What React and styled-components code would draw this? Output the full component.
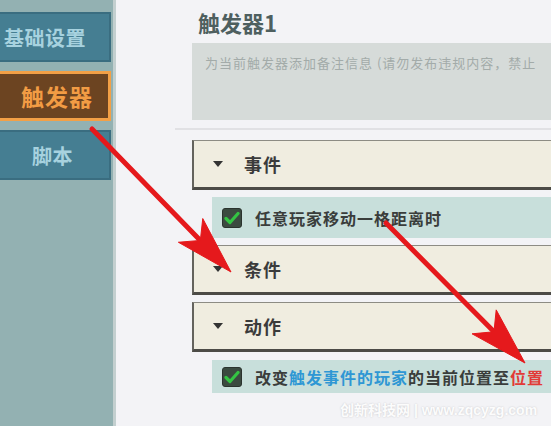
import React from "react";
import styled, { createGlobalStyle } from "styled-components";

const GlobalStyle = createGlobalStyle`
  html, body {
    margin: 0;
    padding: 0;
    background: #f3f3f6;
  }
  * {
    box-sizing: border-box;
  }
`;

const font = `"Noto Sans CJK SC", "Noto Sans", sans-serif`;

const Screen = styled.div`
  position: relative;
  display: flex;
  width: 551px;
  height: 426px;
  overflow: hidden;
  font-family: ${font};
  background: #f3f3f6;
`;

const Sidebar = styled.div`
  flex: 0 0 116px;
  display: flex;
  flex-direction: column;
  gap: 9px;
  padding-top: 12px;
  background: #93b1b2;
  border-right: 3px solid #c3cfcf;
`;

const NavButton = styled.div`
  width: 111px;
  height: 50px;
  display: flex;
  align-items: center;
  padding-left: ${(p) => p.$indent}px;
  font-size: ${(p) => (p.$active ? 23 : 20)}px;
  font-weight: 700;
  letter-spacing: ${(p) => (p.$active ? 1 : 0.5)}px;
  color: ${(p) => (p.$active ? "#f29c44" : "#a7d2df")};
  background: ${(p) => (p.$active ? "#6c4421" : "#457e92")};
  border: ${(p) => (p.$active ? "3px solid #f3a046" : "2px solid #3a6d80")};
  border-left: none;
`;

const Main = styled.div`
  flex: 1;
  display: flex;
  flex-direction: column;
  min-width: 0;
`;

const Head = styled.div`
  padding: 7px 0 0 76px;
`;

const Title = styled.div`
  height: 30px;
  line-height: 30px;
  padding-left: 6px;
  font-size: 22px;
  font-weight: 700;
  color: #4e5f5f;
`;

const Note = styled.div`
  margin-top: 6px;
  margin-right: -20px;
  height: 77px;
  padding: 10px 0 0 13px;
  background: #d6dbd9;
  font-size: 13px;
  letter-spacing: 1px;
  color: #a3aba9;
  white-space: nowrap;
`;

const Divider = styled.div`
  margin: 8px 0 0 59px;
  height: 2px;
  background: #e1e1e4;
`;

const Sections = styled.div`
  display: flex;
  flex-direction: column;
  padding: 10px 0 0 76px;
  margin-right: -20px;
`;

const SectionHead = styled.div`
  display: flex;
  align-items: center;
  height: 50px;
  margin-top: ${(p) => p.$gap || 0}px;
  padding-left: 19px;
  background: #f0ede0;
  border-top: 1px solid #8d8c84;
  border-left: 2px solid #64635d;
  border-bottom: 3px solid #4c4b46;
  font-size: 18px;
  font-weight: 700;
  color: #3b3b3b;
  letter-spacing: 1px;
`;

const Caret = styled.span`
  width: 0;
  height: 0;
  margin-right: 21px;
  border-left: 5px solid transparent;
  border-right: 5px solid transparent;
  border-top: 6px solid #333;
`;

const Row = styled.div`
  display: flex;
  align-items: center;
  height: ${(p) => p.$h}px;
  margin: ${(p) => p.$gap}px 0 0 20px;
  padding-left: 10px;
  background: #c8dfdb;
  font-size: 16px;
  font-weight: 700;
  letter-spacing: 1px;
  color: #3a3d3b;
  white-space: nowrap;
`;

const Check = styled.span`
  flex: 0 0 20px;
  height: 20px;
  margin-right: 13px;
  border-radius: 3px;
  background: #3b4a40;
  border: 1px solid #2b332e;
  display: flex;
  align-items: center;
  justify-content: center;
`;

const Link = styled.span`
  color: ${(p) => (p.$red ? "#e23a36" : "#2f97d4")};
`;

const Overlay = styled.svg`
  position: absolute;
  left: 0;
  top: 0;
  pointer-events: none;
`;

const Watermark = styled.div`
  position: absolute;
  left: 340px;
  top: 399px;
  font-family: "Liberation Sans", ${font};
  font-size: 14px;
  font-weight: 700;
  color: rgba(255, 255, 255, 0.95);
  text-shadow: 0 0 2px rgba(0, 0, 0, 0.18);
  white-space: nowrap;
`;

const Tick = () => (
  <svg width="16" height="14" viewBox="0 0 16 14">
    <path d="M2 7.5 L6 11.5 L14 2.5" fill="none" stroke="#34c443" strokeWidth="3.2" strokeLinecap="round" strokeLinejoin="round" />
  </svg>
);

const Arrow = ({ from, tip }) => {
  const dx = tip[0] - from[0];
  const dy = tip[1] - from[1];
  const len = Math.hypot(dx, dy);
  const d = [dx / len, dy / len];
  const p = [d[1], -d[0]];
  const at = (k, w) => [tip[0] - d[0] * k + p[0] * w, tip[1] - d[1] * k + p[1] * w];
  const w1 = at(58, 17);
  const w2 = at(58, -17);
  const n = at(44, 0);
  const pts = [tip, w1, n, w2].map((q) => q.join(",")).join(" ");
  return (
    <g fill="#e5191c" stroke="#e5191c">
      <line x1={from[0]} y1={from[1]} x2={n[0]} y2={n[1]} strokeWidth="5" strokeLinecap="round" />
      <polygon points={pts} strokeWidth="1" strokeLinejoin="round" />
    </g>
  );
};

export default function App() {
  return (
    <>
      <GlobalStyle />
      <Screen>
        <Sidebar>
          <NavButton $indent={4}>基础设置</NavButton>
          <NavButton $indent={21} $active>
            触发器
          </NavButton>
          <NavButton $indent={32}>脚本</NavButton>
        </Sidebar>
        <Main>
          <Head>
            <Title>触发器1</Title>
            <Note>为当前触发器添加备注信息 (请勿发布违规内容，禁止</Note>
          </Head>
          <Divider />
          <Sections>
            <SectionHead>
              <Caret />
              事件
            </SectionHead>
            <Row $h={41} $gap={7}>
              <Check>
                <Tick />
              </Check>
              任意玩家移动一格距离时
            </Row>
            <SectionHead $gap={7}>
              <Caret />
              条件
            </SectionHead>
            <SectionHead $gap={7}>
              <Caret />
              动作
            </SectionHead>
            <Row $h={33} $gap={8}>
              <Check>
                <Tick />
              </Check>
              改变<Link>触发事件的玩家</Link>的当前位置至<Link $red>位置</Link>
            </Row>
          </Sections>
        </Main>
        <Overlay width="551" height="426" viewBox="0 0 551 426">
          <Arrow from={[92, 129]} tip={[231, 272]} />
          <Arrow from={[386, 223]} tip={[525, 363]} />
        </Overlay>
        <Watermark>创新科技网 | www.zqcyzg.com</Watermark>
      </Screen>
    </>
  );
}
